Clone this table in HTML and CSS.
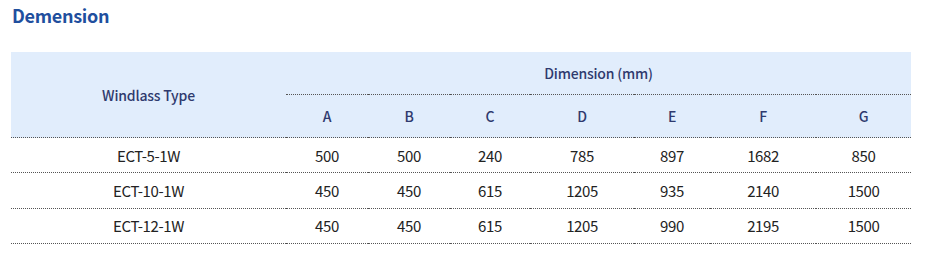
FILE: index.html
```html
<!DOCTYPE html>
<html lang="en">
<head>
<meta charset="utf-8">
<title>Demension</title>
<link rel="stylesheet" href="styles.css">
</head>
<body>
<section class="spec">
  <h2 class="spec-title">Demension</h2>
  <table class="spec-table">
    <colgroup>
      <col class="c-type">
      <col class="c-a"><col class="c-b"><col class="c-c"><col class="c-d">
      <col class="c-e"><col class="c-f"><col class="c-g">
    </colgroup>
    <thead>
      <tr class="head-top">
        <th rowspan="2" class="type-head">Windlass Type</th>
        <th colspan="7" class="group-head">Dimension (mm)</th>
      </tr>
      <tr class="head-sub">
        <th>A</th><th>B</th><th>C</th><th>D</th><th>E</th><th>F</th><th>G</th>
      </tr>
    </thead>
    <tbody>
      <tr><td>ECT-5-1W</td><td>500</td><td>500</td><td>240</td><td>785</td><td>897</td><td>1682</td><td>850</td></tr>
      <tr><td>ECT-10-1W</td><td>450</td><td>450</td><td>615</td><td>1205</td><td>935</td><td>2140</td><td>1500</td></tr>
      <tr><td>ECT-12-1W</td><td>450</td><td>450</td><td>615</td><td>1205</td><td>990</td><td>2195</td><td>1500</td></tr>
    </tbody>
  </table>
</section>
</body>
</html>
```
FILE: styles.css
```css
html, body {
  margin: 0;
  padding: 0;
  background: #ffffff;
}
body {
  font-family: "Noto Sans CJK KR", "Noto Sans", sans-serif;
}
.spec {
  padding: 0 20px 0 11px;
}
.spec-title {
  margin: 0;
  padding: 2px 0 0 1px;
  height: 52px;
  box-sizing: border-box;
  font-size: 18px;
  line-height: 26px;
  font-weight: 700;
  color: #1f4f9e;
  letter-spacing: -0.3px;
}
.spec-table {
  width: 900px;
  border-collapse: collapse;
  table-layout: fixed;
  font-size: 15px;
}
.c-type { width: 275px; }
.c-a { width: 82px; }
.c-b { width: 82px; }
.c-c { width: 80px; }
.c-d { width: 104px; }
.c-e { width: 76px; }
.c-f { width: 106px; }
.c-g { width: 95px; }
.spec-table th {
  background: #e1edfc;
  color: #2f3a6e;
  font-size: 14px;
  font-weight: 500;
  text-align: center;
  padding: 0;
  letter-spacing: -0.2px;
}
.head-top th { height: 42px; }
.head-sub th { height: 42px; }
.group-head {
  border-bottom: 1px dotted #555;
}
.spec-table thead tr.head-sub th,
.type-head {
  border-bottom: 1px dotted #555;
}
.spec-table td {
  height: 34.4px;
  padding: 0;
  text-align: center;
  color: #222;
  border-bottom: 1px dotted #555;
  letter-spacing: -0.4px;
}
```
